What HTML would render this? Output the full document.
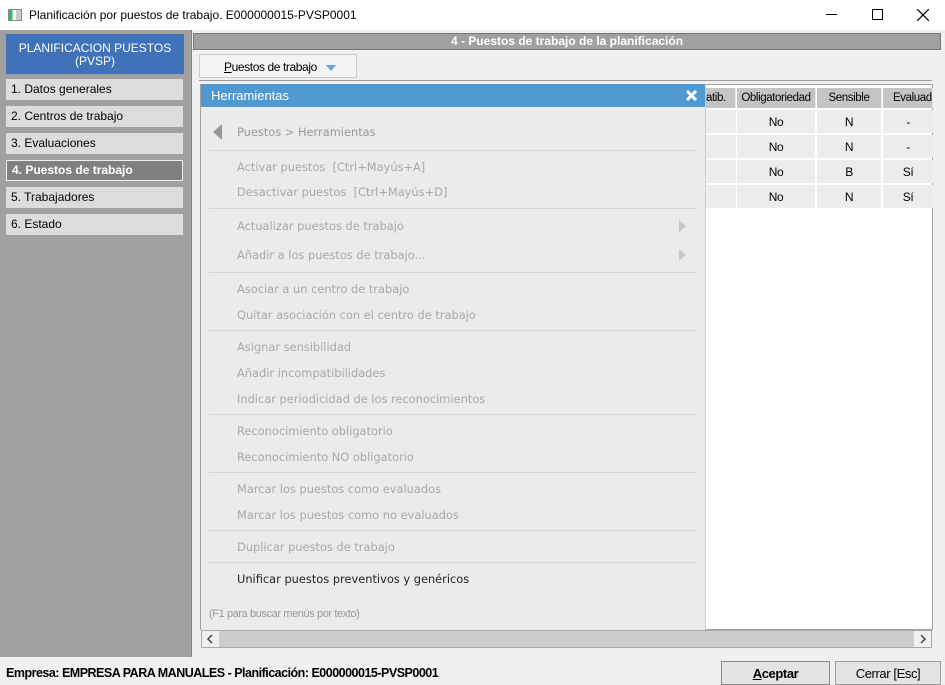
<!DOCTYPE html>
<html><head><meta charset="utf-8"><style>
*{margin:0;padding:0;box-sizing:border-box}
body{width:945px;height:684px;position:relative;overflow:hidden;background:#f0f0f0;font-family:"Liberation Sans",Arial,sans-serif}
.a{position:absolute}
.nar{font-family:"Liberation Sans",sans-serif;letter-spacing:-0.4px}
.mi{position:absolute;left:6px;width:177px;height:21px;background:#dcdcdc;font-size:12px;padding:3px 0 0 5px;color:#000}
.pi{position:absolute;left:237px;font-family:"DejaVu Sans",sans-serif;font-size:11.4px;color:#a8a8a8;white-space:nowrap}
.sep{position:absolute;left:209px;width:488px;height:1px;background:#d6d6d6}
.th{position:absolute;top:88px;height:20px;background:#c4c4c4;font-size:11.5px;text-align:center;padding-top:4px;border-right:1px solid #e8e8e8}
.td{position:absolute;height:23px;background:#ececec;font-size:12px;text-align:center;padding-top:5px}
.arr{position:absolute;left:679px;width:0;height:0;border-top:6px solid transparent;border-bottom:6px solid transparent;border-left:7px solid #c8c8c8}
</style></head><body>
<div class="a" style="left:0;top:0;width:945px;height:30px;background:#fff"></div>
<div class="a" style="left:8px;top:9px;width:14px;height:12px;border:1px solid #888;background:linear-gradient(90deg,#3b6 0 30%,#fff 30% 60%,#ccc 60%)"></div>
<div class="a" style="left:29px;top:8px;font-size:12px;color:#000">Planificación por puestos de trabajo. E000000015-PVSP0001</div>
<div class="a" style="left:826px;top:14px;width:11px;height:1px;background:#000"></div>
<div class="a" style="left:872px;top:9px;width:11px;height:11px;border:1px solid #000"></div>
<svg class="a" style="left:917px;top:9px" width="12" height="12"><path d="M0 0L12 12M12 0L0 12" stroke="#000" stroke-width="1.2"/></svg>
<div class="a" style="left:0;top:30px;width:191px;height:627px;background:#a0a0a0"></div>
<div class="a" style="left:6px;top:34px;width:178px;height:40px;background:#3f72b8;color:#fff;font-size:12px;text-align:center;line-height:13px;padding-top:8px">PLANIFICACION PUESTOS<br>(PVSP)</div>
<div class="mi" style="top:79px">1. Datos generales</div>
<div class="mi" style="top:106px">2. Centros de trabajo</div>
<div class="mi" style="top:133px">3. Evaluaciones</div>
<div class="mi" style="top:160px;background:#808080;border:1px solid #eee;color:#fff;font-weight:bold;padding-top:2px;padding-left:5px">4. Puestos de trabajo</div>
<div class="mi" style="top:187px">5. Trabajadores</div>
<div class="mi" style="top:214px">6. Estado</div>
<div class="a" style="left:191px;top:30px;width:754px;height:627px;background:#f0f0f0;border-left:1px solid #808080"></div>
<div class="a" style="left:193px;top:33px;width:748px;height:17px;background:#a0a0a0;border:1px solid #777;color:#fff;font-weight:bold;font-size:12px;text-align:center;line-height:15px">4 - Puestos de trabajo de la planificación</div>
<div class="a nar" style="left:199px;top:54px;width:158px;height:24px;background:#f4f4f4;border:1px solid #ccc;font-size:12px;padding:5px 0 0 24px"><u>P</u>uestos de trabajo <span style="display:inline-block;margin-left:6px;width:0;height:0;border-left:5px solid transparent;border-right:5px solid transparent;border-top:6px solid #6a9fe0;vertical-align:middle"></span></div>
<div class="a" style="left:199px;top:80px;width:733px;height:1px;background:#999"></div>
<div class="a" style="left:200px;top:84px;width:733px;height:546px;background:#fff;border:1px solid #a0a0a0"></div>
<div class="th nar" style="left:700px;width:36px;text-align:left;padding-left:6px">atib.</div>
<div class="th nar" style="left:737px;width:79px">Obligatoriedad</div>
<div class="th nar" style="left:817px;width:65px">Sensible</div>
<div class="th nar" style="left:883px;width:50px;text-align:left;padding-left:10px">Evaluad</div>
<div class="td nar" style="left:737px;top:110px;width:78px">No</div><div class="td nar" style="left:817px;top:110px;width:64px">N</div><div class="td nar" style="left:883px;top:110px;width:50px">-</div>
<div class="td nar" style="left:737px;top:135px;width:78px">No</div><div class="td nar" style="left:817px;top:135px;width:64px">N</div><div class="td nar" style="left:883px;top:135px;width:50px">-</div>
<div class="td nar" style="left:737px;top:160px;width:78px">No</div><div class="td nar" style="left:817px;top:160px;width:64px">B</div><div class="td nar" style="left:883px;top:160px;width:50px">Sí</div>
<div class="td nar" style="left:737px;top:185px;width:78px">No</div><div class="td nar" style="left:817px;top:185px;width:64px">N</div><div class="td nar" style="left:883px;top:185px;width:50px">Sí</div>
<div class="td" style="left:706px;top:110px;width:30px"></div><div class="td" style="left:706px;top:135px;width:30px"></div><div class="td" style="left:706px;top:160px;width:30px"></div><div class="td" style="left:706px;top:185px;width:30px"></div>
<div class="a" style="left:201px;top:630px;width:731px;height:18px;background:#cdcdcd;border:1px solid #aaa"></div>
<div class="a" style="left:202px;top:631px;width:17px;height:16px;background:#f0f0f0"></div>
<svg class="a" style="left:206px;top:634px" width="8" height="10"><path d="M6 1L2 5L6 9" stroke="#444" fill="none" stroke-width="1.5"/></svg>
<div class="a" style="left:914px;top:631px;width:17px;height:16px;background:#f0f0f0"></div>
<svg class="a" style="left:919px;top:634px" width="8" height="10"><path d="M2 1L6 5L2 9" stroke="#444" fill="none" stroke-width="1.5"/></svg>
<div class="a" style="left:201px;top:84px;width:505px;height:546px;background:#ebebeb;border-right:1px solid #ccc"></div>
<div class="a" style="left:201px;top:84px;width:504px;height:23px;background:#4f98d0;color:#fff;font-size:13px;padding:4px 0 0 10px">Herramientas</div>
<svg class="a" style="left:686px;top:90px" width="11" height="11"><path d="M1 1L10 10M10 1L1 10" stroke="#fff" stroke-width="3"/></svg>
<div class="a" style="left:213px;top:124px;width:0;height:0;border-top:8px solid transparent;border-bottom:8px solid transparent;border-right:9px solid #999"></div>
<div class="pi" style="top:125px;color:#999">Puestos &gt; Herramientas</div>
<div class="sep" style="top:150px"></div>
<div class="pi" style="top:160px">Activar puestos &nbsp;[Ctrl+Mayús+A]</div>
<div class="pi" style="top:185px">Desactivar puestos &nbsp;[Ctrl+Mayús+D]</div>
<div class="sep" style="top:208px"></div>
<div class="pi" style="top:219px">Actualizar puestos de trabajo</div><div class="arr" style="top:220px"></div>
<div class="pi" style="top:248px">Añadir a los puestos de trabajo...</div><div class="arr" style="top:249px"></div>
<div class="sep" style="top:272px"></div>
<div class="pi" style="top:282px">Asociar a un centro de trabajo</div>
<div class="pi" style="top:308px">Quitar asociación con el centro de trabajo</div>
<div class="sep" style="top:330px"></div>
<div class="pi" style="top:340px">Asignar sensibilidad</div>
<div class="pi" style="top:366px">Añadir incompatibilidades</div>
<div class="pi" style="top:392px">Indicar periodicidad de los reconocimientos</div>
<div class="sep" style="top:414px"></div>
<div class="pi" style="top:424px">Reconocimiento obligatorio</div>
<div class="pi" style="top:450px">Reconocimiento NO obligatorio</div>
<div class="sep" style="top:472px"></div>
<div class="pi" style="top:482px">Marcar los puestos como evaluados</div>
<div class="pi" style="top:508px">Marcar los puestos como no evaluados</div>
<div class="sep" style="top:530px"></div>
<div class="pi" style="top:540px">Duplicar puestos de trabajo</div>
<div class="sep" style="top:562px"></div>
<div class="pi" style="top:572px;color:#222">Unificar puestos preventivos y genéricos</div>
<div class="a nar" style="left:209px;top:608px;font-size:11px;color:#999">(F1 para buscar menús por texto)</div>
<div class="a" style="left:0;top:657px;width:945px;height:27px;background:#f0f0f0"></div>
<div class="a nar" style="left:6px;top:666px;font-size:12.5px;font-weight:bold;color:#000;letter-spacing:-0.5px">Empresa: EMPRESA PARA MANUALES - Planificación: E000000015-PVSP0001</div>
<div class="a nar" style="left:721px;top:661px;width:109px;height:24px;border:1px solid #888;background:#e4e4e4;font-size:13px;font-weight:bold;text-align:center;padding-top:4px"><u>A</u>ceptar</div>
<div class="a nar" style="left:835px;top:661px;width:106px;height:24px;border:1px solid #999;background:#e4e4e4;font-size:13px;text-align:center;padding-top:4px">Cerrar [Esc]</div>
</body></html>
